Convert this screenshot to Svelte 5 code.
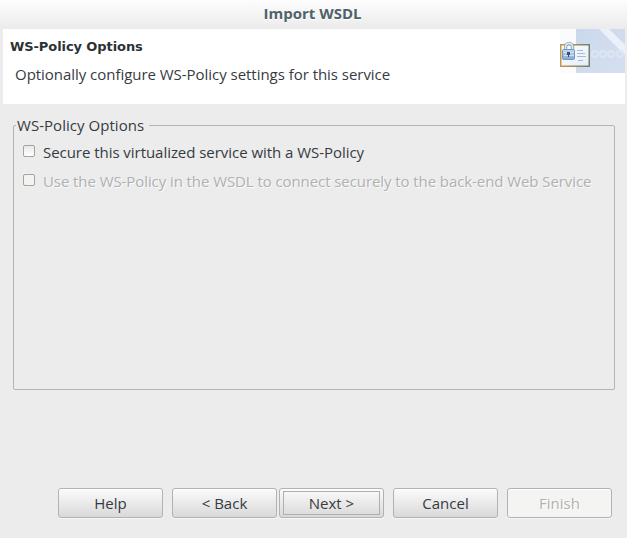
<script>
  const options = [
    { label: 'Secure this virtualized service with a WS-Policy', disabled: false },
    { label: 'Use the WS-Policy in the WSDL to connect securely to the back-end Web Service', disabled: true }
  ];
</script>

<div class="window">
  <div class="titlebar">Import WSDL</div>
  <header>
    <div class="copy">
      <h1>WS-Policy Options</h1>
      <p>Optionally configure WS-Policy settings for this service</p>
    </div>
    <svg class="banner" width="78" height="75" viewBox="0 0 78 75">
      <defs>
        <linearGradient id="sky" x1="0" y1="0" x2="1" y2="1">
          <stop offset="0" stop-color="#cbd8ec" /><stop offset="1" stop-color="#d5dff0" />
        </linearGradient>
        <linearGradient id="card" x1="0" y1="0" x2="1" y2="1">
          <stop offset="0" stop-color="#ffffff" /><stop offset="1" stop-color="#e3edf8" />
        </linearGradient>
        <linearGradient id="frame" x1="0" y1="0" x2="1" y2="0">
          <stop offset="0" stop-color="#c19a50" /><stop offset="1" stop-color="#73816f" />
        </linearGradient>
        <linearGradient id="lock" x1="0" y1="0" x2="0" y2="1">
          <stop offset="0" stop-color="#c6d9ec" /><stop offset="1" stop-color="#86a9d0" />
        </linearGradient>
      </defs>
      <rect x="13" y="0" width="16" height="44" fill="#fbfbfd" />
      <rect x="29" y="0" width="49" height="44" fill="url(#sky)" />
      <path d="M52 0H62L78 16V26Z" fill="#ecf1f9" />
      <g fill="none" stroke="#dde5f2" stroke-width="1.8">
        <circle cx="48" cy="25" r="3" /><circle cx="56" cy="25" r="3" /><circle cx="64" cy="25" r="3" /><circle cx="73" cy="25" r="3" />
      </g>
      <rect x="13.75" y="15.75" width="28.5" height="21.5" fill="url(#card)" stroke="url(#frame)" stroke-width="1.5" />
      <path d="M30 21.5H36M30 24.5H38M30 27.5H39M31 31.5H36" stroke="#a9b8d6" />
      <path d="M18.5 22V18.5C18.5 13 25.5 13 25.5 18.5V22" fill="none" stroke="#84a5bf" stroke-width="3.4" />
      <path d="M18.5 22V18.5C18.5 13 25.5 13 25.5 18.5V22" fill="none" stroke="#e4eae0" stroke-width="1.6" />
      <rect x="15.5" y="20.5" width="12" height="10" rx="1" fill="url(#lock)" stroke="#7297c0" />
      <path d="M17 23.5H27M17 26.5H27" stroke="#d3e0ee" />
      <path d="M20 23H23V26H22V28H21V26H20Z" fill="#354f78" />
    </svg>
  </header>

  <section class="group">
    <h2>WS-Policy Options</h2>
    {#each options as option}
      <label class:disabled={option.disabled}>
        <input type="checkbox" disabled={option.disabled} />
        <span>{option.label}</span>
      </label>
    {/each}
  </section>

  <footer>
    <button>Help</button>
    <div class="pair">
      <button>&lt; Back</button>
      <button class="focused">Next &gt;</button>
    </div>
    <button>Cancel</button>
    <button disabled>Finish</button>
  </footer>
</div>

<style>
  .window {
    box-sizing: border-box;
    width: 627px;
    height: 538px;
    display: flex;
    flex-direction: column;
    background: #ececec;
    color: #363b3f;
    font: 15px/20px "Open Sans", "Noto Sans", sans-serif;
    white-space: nowrap;
    overflow: hidden;
  }
  .titlebar {
    height: 29px;
    flex: none;
    box-sizing: border-box;
    padding: 3px 2px 0 0;
    background: linear-gradient(#fdfdfd, #ebebeb);
    color: #4f626a;
    font-weight: bold;
    text-align: center;
    text-shadow: 0 1px #fff;
  }
  header {
    display: flex;
    justify-content: space-between;
    height: 75px;
    flex: none;
    margin: 0 2px 0 3px;
    background: #fff;
  }
  .copy { padding: 8px 0 0 7px; }
  h1 { margin: 0; font: bold 13px/20px "DejaVu Sans", sans-serif; letter-spacing: -0.08px; color: #2c3135; }
  p { margin: 7px 0 0 5px; letter-spacing: -0.036px; }
  .group {
    box-sizing: border-box;
    height: 265px;
    flex: none;
    margin: 21px 12px 0 13px;
    padding: 0 9px;
    border: 1px solid #b5b5b5;
    border-radius: 2px;
  }
  h2 {
    width: 132px;
    margin: -11px 0 7px -7px;
    padding-left: 1px;
    font: inherit;
    letter-spacing: 0.04px;
    background: #ececec;
  }
  label { display: flex; align-items: flex-start; height: 29px; letter-spacing: -0.042px; }
  label span { margin-left: 8px; }
  .disabled { color: #b0b1b1; letter-spacing: -0.08px; text-shadow: 1px 1px #fafafa; }
  input {
    appearance: none;
    box-sizing: border-box;
    flex: none;
    width: 12px;
    height: 12px;
    margin: 3px 0 0;
    border: 1px solid #a1a59a;
    border-radius: 2px;
    background: linear-gradient(#e9e9e9, #fff);
  }
  input:disabled { background: #f3f3f1; }
  footer { display: flex; gap: 9px; margin: 98px 0 0 58px; }
  .pair { display: flex; gap: 2px; }
  button {
    position: relative;
    box-sizing: border-box;
    width: 105px;
    height: 30px;
    padding: 0;
    border: 1px solid #b1b3b3;
    border-radius: 3px;
    background: linear-gradient(#fbfbfb, #d9d9d9);
    box-shadow: 0 1px #f7f7f7, inset 0 1px #fff;
    color: inherit;
    font: inherit;
  }
  .focused::after {
    content: "";
    position: absolute;
    inset: 2px 3px;
    border: 1px solid #aeb0b0;
  }
  button:disabled { background: #f4f4f2; color: #b1b2b2; text-shadow: 1px 1px #fff; }
</style>
